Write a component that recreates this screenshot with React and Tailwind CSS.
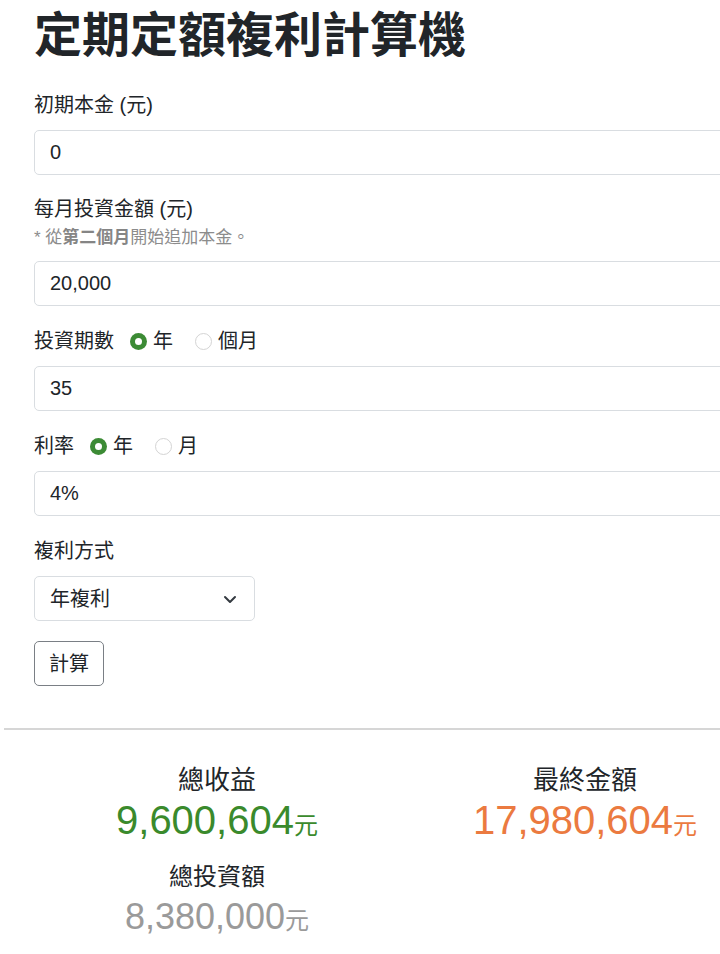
import React, { useState } from 'react';

const font = { fontFamily: '"Liberation Sans", "Noto Sans CJK TC", sans-serif' };

const Radio = ({ checked, label, onClick }) => (
    <button type="button" onClick={onClick} className="flex items-center gap-[6px]">
        {checked ? (
            <span className="w-[17px] h-[17px] rounded-full bg-[#3c8b35] flex items-center justify-center">
                <span className="w-[7px] h-[7px] rounded-full bg-white" />
            </span>
        ) : (
            <span className="w-[17px] h-[17px] rounded-full border border-[#d4d4d4] bg-white" />
        )}
        <span>{label}</span>
    </button>
);

const Field = ({ value }) => (
    <input
        readOnly
        value={value}
        className="block w-[736px] h-[45px] border border-[#d9dde1] rounded-[5px] pl-[15px] text-[20px] text-[#212529] outline-none bg-white"
        style={font}
    />
);

export default function App() {
    const [periodUnit, setPeriodUnit] = useState('year');
    const [rateUnit, setRateUnit] = useState('year');

    return (
        <div className="w-[720px] overflow-hidden bg-white text-[#212529]" style={font}>
            <div className="pl-[34px]">
                <h1 className="text-[48px] leading-[58px] font-bold mt-[7px] mb-[25px]">定期定額複利計算機</h1>

                <div className="text-[20px] leading-[30px] mb-[10px]">初期本金 (元)</div>
                <Field value="0" />

                <div className="text-[20px] leading-[30px] mt-[19px]">每月投資金額 (元)</div>
                <div className="text-[17px] leading-[22px] mt-[3px] mb-[12px] text-[#8c8c8c]">
                    * 從<span className="font-bold text-[#858585]">第二個月</span>開始追加本金。
                </div>
                <Field value="20,000" />

                <div className="flex items-center text-[20px] leading-[30px] mt-[20px] mb-[10px]">
                    <span className="mr-[16px]">投資期數</span>
                    <Radio checked={periodUnit === 'year'} label="年" onClick={() => setPeriodUnit('year')} />
                    <span className="w-[22px]" />
                    <Radio checked={periodUnit === 'month'} label="個月" onClick={() => setPeriodUnit('month')} />
                </div>
                <Field value="35" />

                <div className="flex items-center text-[20px] leading-[30px] mt-[20px] mb-[10px]">
                    <span className="mr-[16px]">利率</span>
                    <Radio checked={rateUnit === 'year'} label="年" onClick={() => setRateUnit('year')} />
                    <span className="w-[22px]" />
                    <Radio checked={rateUnit === 'month'} label="月" onClick={() => setRateUnit('month')} />
                </div>
                <Field value="4%" />

                <div className="text-[20px] leading-[30px] mt-[20px] mb-[10px]">複利方式</div>
                <div className="w-[221px] h-[45px] border border-[#d9dde1] rounded-[5px] pl-[15px] pr-[16px] flex items-center justify-between text-[20px]">
                    <span>年複利</span>
                    <svg width="16" height="16" viewBox="0 0 16 16" fill="none" stroke="#343a40" strokeWidth="2" strokeLinecap="round" strokeLinejoin="round">
                        <path d="M3 6l5 5 5-5" />
                    </svg>
                </div>

                <button className="mt-[20px] h-[45px] px-[14px] border border-[#7a7f85] rounded-[5px] text-[20px] text-[#212529]">計算</button>
            </div>

            <hr className="ml-[4px] w-[800px] mt-[42px] border-0 border-t-2 border-[#d6d6d6]" />

            <div className="ml-[33px] w-[736px] grid grid-cols-2 mt-[35px] pb-[14px]">
                <div className="flex flex-col items-center">
                    <div className="text-[26px] leading-[31px]">總收益</div>
                    <div className="text-[40px] leading-[48px] text-[#3a8a2c]">
                        9,600,604<span className="text-[24px]">元</span>
                    </div>
                    <div className="text-[24px] leading-[29px] mt-[12px]">總投資額</div>
                    <div className="text-[36px] leading-[52px] text-[#9a9a9a]">
                        8,380,000<span className="text-[24px]">元</span>
                    </div>
                </div>
                <div className="flex flex-col items-center">
                    <div className="text-[26px] leading-[31px]">最終金額</div>
                    <div className="text-[40px] leading-[48px] text-[#eb7a40]">
                        17,980,604<span className="text-[24px]">元</span>
                    </div>
                </div>
            </div>
        </div>
    );
}
